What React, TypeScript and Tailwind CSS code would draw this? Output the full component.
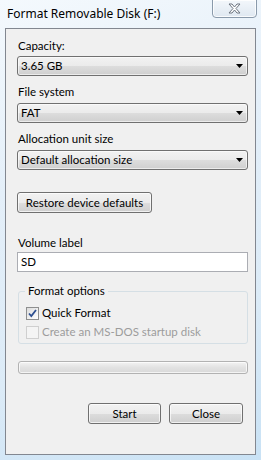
import type { ReactNode } from "react";

const FONT = "font-['Lato',_'Noto_Sans',_sans-serif]";

function Combo({ value }: { value: string }) {
  return (
    <div className="h-[20px] w-[231px] rounded-[3px] border border-[#707070] bg-[linear-gradient(#f2f2f2_0%,#ebebeb_50%,#dddddd_51%,#cfcfcf_100%)] flex items-center pl-[3px] pr-[4px] shadow-[inset_0_0_0_1px_rgba(255,255,255,0.6)]">
      <span className="flex-1 text-[11.5px] leading-none text-black">{value}</span>
      <svg width="7" height="4" viewBox="0 0 7 4">
        <path d="M0 0h7L3.5 4z" fill="#000" />
      </svg>
    </div>
  );
}

function Button({ children, className }: { children: ReactNode; className: string }) {
  return (
    <div
      className={`h-[21px] rounded-[3px] border border-[#707070] bg-[linear-gradient(#f2f2f2_0%,#ebebeb_50%,#dddddd_51%,#cfcfcf_100%)] shadow-[inset_0_0_0_1px_rgba(255,255,255,0.7)] flex items-center justify-center text-[11.5px] leading-none text-black ${className}`}
    >
      {children}
    </div>
  );
}

function Label({ children, className = "" }: { children: ReactNode; className?: string }) {
  return <div className={`h-[16px] leading-[16px] text-[11.5px] text-black pl-[1px] ${className}`}>{children}</div>;
}

export default function App() {
  return (
    <div
      className={`w-[261px] h-[460px] overflow-hidden flex flex-col bg-[linear-gradient(160deg,#f4f9fd_0%,#e4eff9_35%,#dcebf7_70%,#c9e2f5_100%)] ${FONT}`}
    >
      {/* title bar */}
      <div className="h-[28px] flex items-start shrink-0">
        <div className="pl-[7px] pt-[6px] text-[12px] leading-[16px] text-black flex-1 font-['Noto_Sans',_sans-serif]">
          Format Removable Disk (F:)
        </div>
        <div className="mr-[4px] mt-[-1px] w-[45px] h-[19px] rounded-b-[4px] border border-[#8a9aab] bg-[linear-gradient(#f3f7fb,#dfe8f1)] shadow-[inset_0_0_0_1px_rgba(255,255,255,0.8)] flex items-center justify-center">
          <svg width="13" height="11" viewBox="0 0 13 11">
            <path
              d="M1 1h3l2.5 3L9 1h3L8 5.5 12 10H9L6.5 7 4 10H1l4-4.5z"
              fill="#fff"
              stroke="#6d7580"
              strokeWidth="1"
              strokeLinejoin="round"
            />
          </svg>
        </div>
      </div>

      {/* client area */}
      <div className="ml-[5px] w-[251px] h-[427px] border border-[#828790] bg-[#f0f0f0] px-[11px] pt-[9px] flex flex-col">
        <Label>Capacity:</Label>
        <div className="mt-[2px]">
          <Combo value="3.65 GB" />
        </div>
        <Label className="mt-[8px]">File system</Label>
        <div className="mt-[3px]">
          <Combo value="FAT" />
        </div>
        <Label className="mt-[8px]">Allocation unit size</Label>
        <div className="mt-[3px]">
          <Combo value="Default allocation size" />
        </div>
        <div className="mt-[22px]">
          <Button className="w-[135px]">Restore device defaults</Button>
        </div>
        <Label className="mt-[22px]">Volume label</Label>
        <div className="mt-[1px] h-[20px] w-[231px] border border-[#abadb3] bg-white flex items-center pl-[3px] text-[11.5px] leading-none text-black">
          SD
        </div>

        {/* format options group */}
        <div className="mt-[19px] ml-[1px] w-[230px] h-[53px] rounded-[3px] border border-[#d5dfe5] relative px-[7px] pt-[13px] flex flex-col gap-[3px]">
          <div className="absolute left-[6px] top-[-9px] px-[3px] bg-[#f0f0f0] text-[11.5px] leading-[16px] text-black">
            Format options
          </div>
          <div className="flex items-center gap-[3px] h-[16px]">
            <div className="w-[13px] h-[13px] border border-[#8e8f8f] bg-[linear-gradient(135deg,#dcdcdc,#ffffff)] flex items-center justify-center">
              <svg width="9" height="9" viewBox="0 0 9 9">
                <path d="M1 4.5l2.3 2.5L8 1" fill="none" stroke="#2d4f90" strokeWidth="1.8" />
              </svg>
            </div>
            <span className="text-[11.5px] leading-none text-black">Quick Format</span>
          </div>
          <div className="flex items-center gap-[3px] h-[16px]">
            <div className="w-[13px] h-[13px] border border-[#cfcfcf] bg-[#f4f4f4]" />
            <span className="text-[11.5px] leading-none text-[#9c9c9c]">Create an MS-DOS startup disk</span>
          </div>
        </div>

        {/* progress bar */}
        <div className="mt-[17px] ml-[1px] w-[230px] h-[13px] rounded-[3px] border border-[#b2b2b2] bg-[linear-gradient(#f3f3f3,#e2e2e2_50%,#d9d9d9)] shadow-[inset_0_0_0_1px_rgba(255,255,255,0.7)]" />

        <div className="mt-[29px] flex justify-end gap-[8px] pr-[1px]">
          <Button className="w-[73px]">Start</Button>
          <Button className="w-[74px]">Close</Button>
        </div>
      </div>
    </div>
  );
}
